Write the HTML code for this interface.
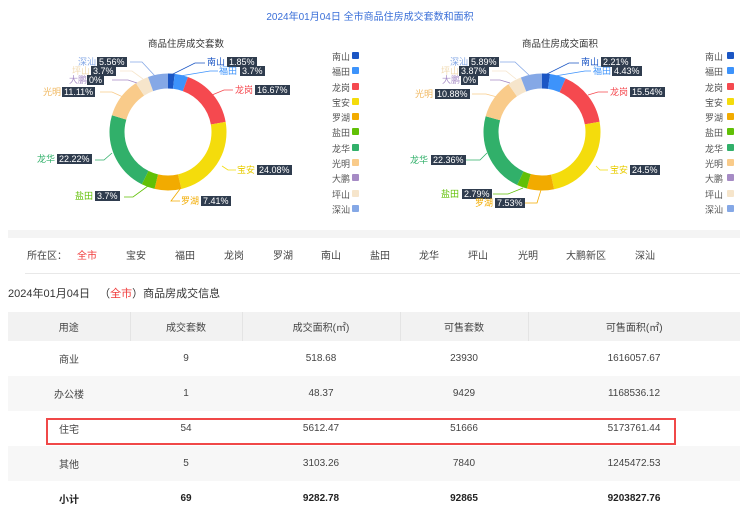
<!DOCTYPE html>
<html><head><meta charset="utf-8"><style>
*{margin:0;padding:0;box-sizing:border-box}
body{width:740px;height:513px;overflow:hidden;background:#fff;font-family:"Liberation Sans","Noto Sans CJK SC",sans-serif;position:relative;color:#333}
.a{position:absolute;white-space:nowrap}
.t{font-size:9px;line-height:11px}
.b{background:#2f3c4e;color:#fff;font-size:9px;line-height:10px;padding:0 2px;position:absolute;white-space:nowrap}
.lg{position:absolute;font-size:9px;color:#555;line-height:11px}
.sq{position:absolute;width:7px;height:7px;border-radius:1px}
table{position:absolute;left:8px;top:312px;width:732px;border-collapse:collapse;font-size:10px;color:#444}
td{text-align:center;height:35px}
tr.h td{background:#f2f2f2;height:29px;border-right:1px solid #e4e4e4}
tr.g td{background:#f7f7f7}
tr.s td{font-weight:bold;color:#222}
</style></head><body>
<div class="a" style="left:0;width:740px;top:8px;text-align:center;font-size:10px;color:#3a6fd8">2024年01月04日 全市商品住房成交套数和面积</div>
<div class="a" style="left:148px;top:36px;font-size:9.5px;color:#333">商品住房成交套数</div>
<div class="a" style="left:522px;top:36px;font-size:9.5px;color:#333">商品住房成交面积</div>

<svg class="a" style="left:0;top:0" width="740" height="230">
<g fill="none" stroke-width="15" transform="translate(168,132) rotate(-90)">
<circle r="51" pathLength="100" stroke="#1b56c4" stroke-dasharray="1.85 100" stroke-dashoffset="0"/>
<circle r="51" pathLength="100" stroke="#3d93fb" stroke-dasharray="3.7 100" stroke-dashoffset="-1.85"/>
<circle r="51" pathLength="100" stroke="#f5494f" stroke-dasharray="16.67 100" stroke-dashoffset="-5.55"/>
<circle r="51" pathLength="100" stroke="#f4dc0c" stroke-dasharray="24.08 100" stroke-dashoffset="-22.22"/>
<circle r="51" pathLength="100" stroke="#f2ab00" stroke-dasharray="7.41 100" stroke-dashoffset="-46.3"/>
<circle r="51" pathLength="100" stroke="#61c006" stroke-dasharray="3.7 100" stroke-dashoffset="-53.71"/>
<circle r="51" pathLength="100" stroke="#31b06a" stroke-dasharray="22.22 100" stroke-dashoffset="-57.41"/>
<circle r="51" pathLength="100" stroke="#f9cb8a" stroke-dasharray="11.11 100" stroke-dashoffset="-79.63"/>
<circle r="51" pathLength="100" stroke="#f6e5cb" stroke-dasharray="3.7 100" stroke-dashoffset="-90.74"/>
<circle r="51" pathLength="100" stroke="#85a8e6" stroke-dasharray="5.56 100" stroke-dashoffset="-94.44"/>
</g>
<g fill="none" stroke-width="15" transform="translate(542,132) rotate(-90)">
<circle r="51" pathLength="100" stroke="#1b56c4" stroke-dasharray="2.21 100" stroke-dashoffset="0"/>
<circle r="51" pathLength="100" stroke="#3d93fb" stroke-dasharray="4.43 100" stroke-dashoffset="-2.21"/>
<circle r="51" pathLength="100" stroke="#f5494f" stroke-dasharray="15.54 100" stroke-dashoffset="-6.64"/>
<circle r="51" pathLength="100" stroke="#f4dc0c" stroke-dasharray="24.5 100" stroke-dashoffset="-22.18"/>
<circle r="51" pathLength="100" stroke="#f2ab00" stroke-dasharray="7.53 100" stroke-dashoffset="-46.68"/>
<circle r="51" pathLength="100" stroke="#61c006" stroke-dasharray="2.79 100" stroke-dashoffset="-54.21"/>
<circle r="51" pathLength="100" stroke="#31b06a" stroke-dasharray="22.36 100" stroke-dashoffset="-57"/>
<circle r="51" pathLength="100" stroke="#f9cb8a" stroke-dasharray="10.88 100" stroke-dashoffset="-79.36"/>
<circle r="51" pathLength="100" stroke="#f6e5cb" stroke-dasharray="3.87 100" stroke-dashoffset="-90.24"/>
<circle r="51" pathLength="100" stroke="#85a8e6" stroke-dasharray="5.89 100" stroke-dashoffset="-94.11"/>
</g>
<g fill="none" stroke-width="0.8">
<polyline points="171,75 195,63 205,63" stroke="#1b56c4"/>
<polyline points="180,76 210,71 218,71" stroke="#3d93fb"/>
<polyline points="212,95 224,90 233,90" stroke="#f5494f"/>
<polyline points="222,166 228,170 236,170" stroke="#f4dc0c"/>
<polyline points="180,189 171,201 180,201" stroke="#f2ab00"/>
<polyline points="148,186 133,197 124,197" stroke="#61c006"/>
<polyline points="112,153 104,160 95,160" stroke="#31b06a"/>
<polyline points="123,97 112,92 100,92" stroke="#f9cb8a"/>
<polyline points="137,83 128,80 112,80" stroke="#a68bc5"/>
<polyline points="143,79 132,71 120,71" stroke="#f6e5cb"/>
<polyline points="155,76 142,62 130,62" stroke="#85a8e6"/>
<polyline points="545,75 569,63 579,63" stroke="#1b56c4"/>
<polyline points="555,76 585,71 591,71" stroke="#3d93fb"/>
<polyline points="588,95 598,92 608,92" stroke="#f5494f"/>
<polyline points="596,166 600,170 608,170" stroke="#f4dc0c"/>
<polyline points="541,190 537,203 525,203" stroke="#f2ab00"/>
<polyline points="523,188 508,194 493,194" stroke="#61c006"/>
<polyline points="487,153 480,160 466,160" stroke="#31b06a"/>
<polyline points="497,97 486,94 472,94" stroke="#f9cb8a"/>
<polyline points="510,83 500,80 490,80" stroke="#a68bc5"/>
<polyline points="516,79 506,71 492,71" stroke="#f6e5cb"/>
<polyline points="530,76 515,62 500,62" stroke="#85a8e6"/>
</g>
</svg>

<!-- left labels -->
<div class="a t" style="left:78px;top:57px;color:#85a8e6">深汕</div><div class="b" style="left:97px;top:57px">5.56%</div>
<div class="a t" style="left:72px;top:66px;color:#f0d9b0">坪山</div><div class="b" style="left:91px;top:66px">3.7%</div>
<div class="a t" style="left:69px;top:75px;color:#a68bc5">大鹏</div><div class="b" style="left:87px;top:75px">0%</div>
<div class="a t" style="left:43px;top:87px;color:#f0b860">光明</div><div class="b" style="left:62px;top:87px">11.11%</div>
<div class="a t" style="left:37px;top:154px;color:#31b06a">龙华</div><div class="b" style="left:57px;top:154px">22.22%</div>
<div class="a t" style="left:75px;top:191px;color:#61c006">盐田</div><div class="b" style="left:95px;top:191px">3.7%</div>
<div class="a t" style="left:181px;top:196px;color:#f2ab00">罗湖</div><div class="b" style="left:201px;top:196px">7.41%</div>
<div class="a t" style="left:237px;top:165px;color:#e8cc00">宝安</div><div class="b" style="left:257px;top:165px">24.08%</div>
<div class="a t" style="left:235px;top:85px;color:#f5494f">龙岗</div><div class="b" style="left:255px;top:85px">16.67%</div>
<div class="a t" style="left:207px;top:57px;color:#1b56c4">南山</div><div class="b" style="left:227px;top:57px">1.85%</div>
<div class="a t" style="left:219px;top:66px;color:#3d93fb">福田</div><div class="b" style="left:240px;top:66px">3.7%</div>
<!-- right labels -->
<div class="a t" style="left:450px;top:57px;color:#85a8e6">深汕</div><div class="b" style="left:469px;top:57px">5.89%</div>
<div class="a t" style="left:441px;top:66px;color:#f0d9b0">坪山</div><div class="b" style="left:459px;top:66px">3.87%</div>
<div class="a t" style="left:442px;top:75px;color:#a68bc5">大鹏</div><div class="b" style="left:461px;top:75px">0%</div>
<div class="a t" style="left:415px;top:89px;color:#f0b860">光明</div><div class="b" style="left:435px;top:89px">10.88%</div>
<div class="a t" style="left:410px;top:155px;color:#31b06a">龙华</div><div class="b" style="left:431px;top:155px">22.36%</div>
<div class="a t" style="left:441px;top:189px;color:#61c006">盐田</div><div class="b" style="left:462px;top:189px">2.79%</div>
<div class="a t" style="left:475px;top:198px;color:#f2ab00">罗湖</div><div class="b" style="left:495px;top:198px">7.53%</div>
<div class="a t" style="left:610px;top:165px;color:#e8cc00">宝安</div><div class="b" style="left:630px;top:165px">24.5%</div>
<div class="a t" style="left:610px;top:87px;color:#f5494f">龙岗</div><div class="b" style="left:630px;top:87px">15.54%</div>
<div class="a t" style="left:581px;top:57px;color:#1b56c4">南山</div><div class="b" style="left:601px;top:57px">2.21%</div>
<div class="a t" style="left:593px;top:66px;color:#3d93fb">福田</div><div class="b" style="left:612px;top:66px">4.43%</div>

<!-- legends -->
<div class="lg" style="left:332px;top:50px">南山<br>福田<br>龙岗<br>宝安<br>罗湖<br>盐田<br>龙华<br>光明<br>大鹏<br>坪山<br>深汕</div>
<div class="lg" style="left:705px;top:50px">南山<br>福田<br>龙岗<br>宝安<br>罗湖<br>盐田<br>龙华<br>光明<br>大鹏<br>坪山<br>深汕</div>
<style>.lg{line-height:15.3px}</style>
<div class="sq" style="left:352px;top:52px;background:#1b56c4"></div><div class="sq" style="left:352px;top:67px;background:#3d93fb"></div><div class="sq" style="left:352px;top:83px;background:#f5494f"></div><div class="sq" style="left:352px;top:98px;background:#f4dc0c"></div><div class="sq" style="left:352px;top:113px;background:#f2ab00"></div><div class="sq" style="left:352px;top:128px;background:#61c006"></div><div class="sq" style="left:352px;top:144px;background:#31b06a"></div><div class="sq" style="left:352px;top:159px;background:#f9cb8a"></div><div class="sq" style="left:352px;top:174px;background:#a68bc5"></div><div class="sq" style="left:352px;top:190px;background:#f6e5cb"></div><div class="sq" style="left:352px;top:205px;background:#85a8e6"></div>
<div class="sq" style="left:727px;top:52px;background:#1b56c4"></div><div class="sq" style="left:727px;top:67px;background:#3d93fb"></div><div class="sq" style="left:727px;top:83px;background:#f5494f"></div><div class="sq" style="left:727px;top:98px;background:#f4dc0c"></div><div class="sq" style="left:727px;top:113px;background:#f2ab00"></div><div class="sq" style="left:727px;top:128px;background:#61c006"></div><div class="sq" style="left:727px;top:144px;background:#31b06a"></div><div class="sq" style="left:727px;top:159px;background:#f9cb8a"></div><div class="sq" style="left:727px;top:174px;background:#a68bc5"></div><div class="sq" style="left:727px;top:190px;background:#f6e5cb"></div><div class="sq" style="left:727px;top:205px;background:#85a8e6"></div>

<div class="a" style="left:8px;top:230px;width:732px;height:8px;background:#f4f4f4"></div>
<div class="a" style="left:27px;top:250px;font-size:10px;color:#444;line-height:13px">所在区：</div>
<div class="a" style="top:250px;font-size:10px;line-height:13px;color:#444;left:0">
<span class="a" style="left:77px;color:#f03a3a">全市</span><span class="a" style="left:126px">宝安</span><span class="a" style="left:175px">福田</span><span class="a" style="left:224px">龙岗</span><span class="a" style="left:273px">罗湖</span><span class="a" style="left:321px">南山</span><span class="a" style="left:370px">盐田</span><span class="a" style="left:419px">龙华</span><span class="a" style="left:468px">坪山</span><span class="a" style="left:518px">光明</span><span class="a" style="left:566px">大鹏新区</span><span class="a" style="left:635px">深汕</span></div>
<div class="a" style="left:25px;top:273px;width:715px;height:1px;background:#e8e8e8"></div>
<div class="a" style="left:8px;top:285px;font-size:11px;color:#333">2024年01月04日 &nbsp;&nbsp;（<span style="color:#f03a3a">全市</span>）商品房成交信息</div>

<table>
<tr class="h"><td style="width:122px">用途</td><td style="width:112px">成交套数</td><td style="width:158px">成交面积(㎡)</td><td style="width:128px">可售套数</td><td style="border-right:0">可售面积(㎡)</td></tr>
<tr><td>商业</td><td>9</td><td>518.68</td><td>23930</td><td>1616057.67</td></tr>
<tr class="g"><td>办公楼</td><td>1</td><td>48.37</td><td>9429</td><td>1168536.12</td></tr>
<tr><td>住宅</td><td>54</td><td>5612.47</td><td>51666</td><td>5173761.44</td></tr>
<tr class="g"><td>其他</td><td>5</td><td>3103.26</td><td>7840</td><td>1245472.53</td></tr>
<tr class="s"><td>小计</td><td>69</td><td>9282.78</td><td>92865</td><td>9203827.76</td></tr>
</table>
<div class="a" style="left:46px;top:418px;width:630px;height:27px;border:2px solid #f04848"></div>
</body></html>
